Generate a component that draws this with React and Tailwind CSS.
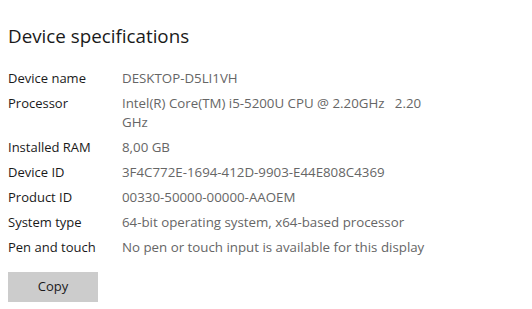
import React from 'react';

const specs = [
  ['Device name', 'DESKTOP-D5LI1VH'],
  ['Processor', 'Intel(R) Core(TM) i5-5200U CPU @ 2.20GHz   2.20 GHz'],
  ['Installed RAM', '8,00 GB'],
  ['Device ID', '3F4C772E-1694-412D-9903-E44E808C4369'],
  ['Product ID', '00330-50000-00000-AAOEM'],
  ['System type', '64-bit operating system, x64-based processor'],
  ['Pen and touch', 'No pen or touch input is available for this display'],
];

const App = () => {
  return (
    <div className="w-[532px] h-[309px] bg-white pl-2 pt-[22px] font-['Open_Sans',sans-serif]">
      <h2 className="text-[18.8px] leading-[28px] text-[#1a1a1a]">Device specifications</h2>

      <div className="mt-[19px] flex flex-col gap-[6px]">
        {specs.map(([label, value]) => (
          <div key={label} className="flex text-[13px] leading-[19px]">
            <div className="w-[114px] shrink-0 text-[#1a1a1a]">{label}</div>
            <div className="w-[315px] text-[13.3px] text-[#666666] whitespace-pre-wrap">{value}</div>
          </div>
        ))}
      </div>

      <button className="mt-[15px] w-[90px] h-[30px] bg-[#cccccc] text-[13px] text-[#1a1a1a]">
        Copy
      </button>
    </div>
  );
};

export default App;
